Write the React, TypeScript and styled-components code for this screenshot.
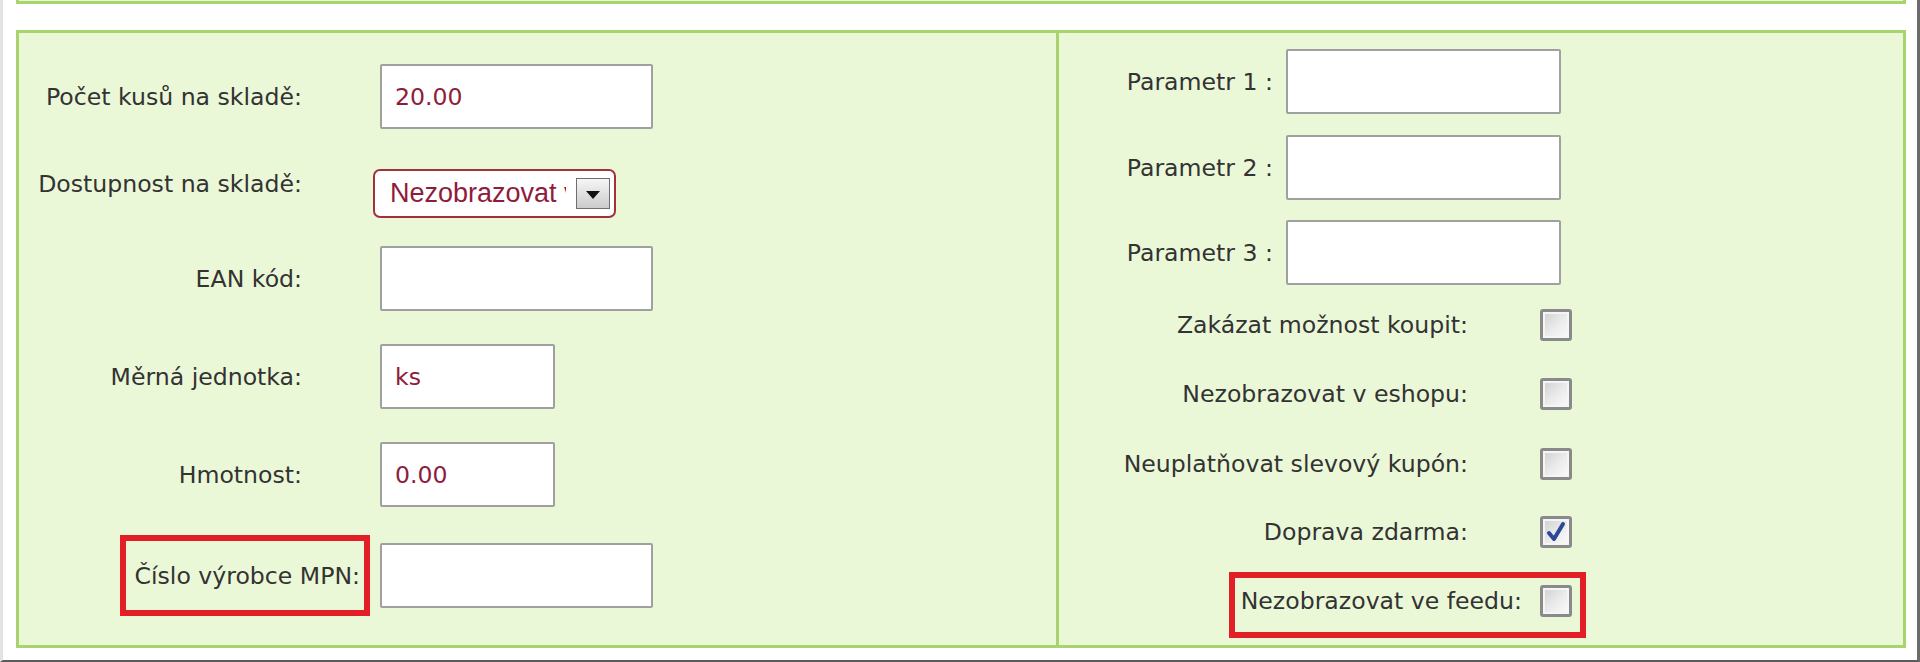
import React from 'react';
import styled, { createGlobalStyle } from 'styled-components';

const GlobalStyle = createGlobalStyle`
  html, body {
    margin: 0;
    padding: 0;
    background: #fff;
  }
  body {
    font-family: "DejaVu Sans", Verdana, sans-serif;
  }
`;

const GREEN = '#a7d46c';
const PALE = '#ebf8d8';
const TEXT = '#333333';
const VALUE = '#8e1c3b';

const Page = styled.div`
  box-sizing: border-box;
  width: 1920px;
  height: 662px;
  border-left: 3px solid #e3e3e3;
  border-right: 3px solid #6b6b6b;
  border-bottom: 2px solid #5b5b5b;
  padding: 0 11px 0 13px;
  background: #fff;
  overflow: hidden;
`;

const TopPanel = styled.div`
  height: 1px;
  background: ${PALE};
  border: 3px solid ${GREEN};
  border-top: none;
`;

const Panel = styled.div`
  box-sizing: border-box;
  margin-top: 26px;
  height: 618px;
  border: 3px solid ${GREEN};
  background: ${PALE};
  display: grid;
  grid-template-columns: 1040px 1fr;
`;

const LeftColumn = styled.div`
  border-right: 3px solid ${GREEN};
  display: flex;
  flex-direction: column;
`;

const RightColumn = styled.div`
  display: flex;
  flex-direction: column;
`;

const FieldRow = styled.div<{ $mt: number; $cols: number; $align?: string }>`
  display: grid;
  grid-template-columns: ${p => p.$cols}px auto;
  align-items: ${p => p.$align ?? 'center'};
  justify-items: start;
  margin-top: ${p => p.$mt}px;
`;

const Label = styled.label<{ $pr: number }>`
  justify-self: stretch;
  text-align: right;
  padding-right: ${p => p.$pr}px;
  font-size: 23.6px;
  line-height: 30px;
  color: ${TEXT};
  white-space: nowrap;
`;

const TextInput = styled.input<{ $w: number; $ml: number }>`
  box-sizing: border-box;
  width: ${p => p.$w}px;
  height: 65px;
  margin: 0 0 0 ${p => p.$ml}px;
  padding: 0 0 0 13px;
  border: 2px solid #a0a0a0;
  border-radius: 2px;
  background: #fff;
  font: 23.6px "DejaVu Sans", Verdana, sans-serif;
  color: ${VALUE};
  outline: none;
`;

const Select = styled.div`
  box-sizing: border-box;
  margin-left: 1px;
  width: 243px;
  height: 49px;
  border: 2px solid #a3313b;
  border-radius: 7px;
  background: #fff;
  display: flex;
  align-items: center;
  padding: 0 4px 0 15px;
`;

const SelectText = styled.span`
  width: 176px;
  overflow: hidden;
  white-space: nowrap;
  font: 27px "Liberation Sans", Arial, sans-serif;
  color: ${VALUE};
`;

const SelectButton = styled.span`
  box-sizing: border-box;
  margin-left: auto;
  width: 34px;
  height: 31px;
  border: 1px solid #6f6f6f;
  background: linear-gradient(#f6f6f6, #cbcbcb);
  display: flex;
  align-items: center;
  justify-content: center;
`;

const Arrow = styled.span`
  width: 0;
  height: 0;
  border-left: 7px solid transparent;
  border-right: 7px solid transparent;
  border-top: 8px solid #111;
  margin-top: 2px;
`;

const Highlight = styled.div<{ $pad: string; $mr: number; $h?: number }>`
  box-sizing: border-box;
  border: 6px solid #e21f26;
  display: flex;
  align-items: center;
  padding: ${p => p.$pad};
  margin-right: ${p => p.$mr}px;
  ${p => (p.$h ? `height: ${p.$h}px;` : '')}
`;

const HighlightText = styled.span<{ $mr?: number }>`
  font-size: 23.6px;
  line-height: 30px;
  color: ${TEXT};
  white-space: nowrap;
  margin-right: ${p => p.$mr ?? 0}px;
`;

const CheckRow = styled.div<{ $mt: number }>`
  display: flex;
  justify-content: flex-end;
  align-items: center;
  margin-top: ${p => p.$mt}px;
  padding-right: 331px;
`;

const CheckLabel = styled.span<{ $mr: number }>`
  font-size: 23.6px;
  line-height: 30px;
  color: ${TEXT};
  white-space: nowrap;
  margin-right: ${p => p.$mr}px;
`;

const CheckBox = styled.span`
  box-sizing: border-box;
  flex: none;
  width: 32px;
  height: 32px;
  border: 3px solid #8a8a8a;
  border-radius: 3px;
  background: linear-gradient(135deg, #cfcfcf 0%, #ececec 55%, #fbfbfb 100%);
  box-shadow: inset 0 0 0 2px #f5f5f5;
  display: flex;
  align-items: center;
  justify-content: center;
`;

const Check = ({ checked }: { checked?: boolean }) => (
  <CheckBox>
    {checked && (
      <svg width="22" height="22" viewBox="0 0 22 22">
        <path d="M4 12 L9 18 L18 3" fill="none" stroke="#2b4896" strokeWidth="4" strokeLinecap="round" strokeLinejoin="round" />
      </svg>
    )}
  </CheckBox>
);

const App = () => {
  return (
    <>
      <GlobalStyle />
      <Page>
        <TopPanel />
        <Panel>
          <LeftColumn>
            <FieldRow $mt={31} $cols={353}>
              <Label $pr={70}>Počet kusů na skladě:</Label>
              <TextInput $w={273} $ml={8} defaultValue="20.00" />
            </FieldRow>
            <FieldRow $mt={40} $cols={353} $align="start">
              <Label $pr={70}>Dostupnost na skladě:</Label>
              <Select>
                <SelectText>Nezobrazovat v eshopu</SelectText>
                <SelectButton>
                  <Arrow />
                </SelectButton>
              </Select>
            </FieldRow>
            <FieldRow $mt={28} $cols={353}>
              <Label $pr={70}>EAN kód:</Label>
              <TextInput $w={273} $ml={8} defaultValue="" />
            </FieldRow>
            <FieldRow $mt={33} $cols={353}>
              <Label $pr={70}>Měrná jednotka:</Label>
              <TextInput $w={175} $ml={8} defaultValue="ks" />
            </FieldRow>
            <FieldRow $mt={33} $cols={353}>
              <Label $pr={70}>Hmotnost:</Label>
              <TextInput $w={175} $ml={8} defaultValue="0.00" />
            </FieldRow>
            <FieldRow $mt={28} $cols={353}>
              <Highlight $pad="0 4px 0 9px" $mr={2} $h={81} style={{ justifySelf: 'end' }}>
                <HighlightText>Číslo výrobce MPN:</HighlightText>
              </Highlight>
              <TextInput $w={273} $ml={8} defaultValue="" />
            </FieldRow>
          </LeftColumn>
          <RightColumn>
            <FieldRow $mt={16} $cols={227}>
              <Label $pr={13}>Parametr 1 :</Label>
              <TextInput $w={275} $ml={0} defaultValue="" />
            </FieldRow>
            <FieldRow $mt={21} $cols={227}>
              <Label $pr={13}>Parametr 2 :</Label>
              <TextInput $w={275} $ml={0} defaultValue="" />
            </FieldRow>
            <FieldRow $mt={20} $cols={227}>
              <Label $pr={13}>Parametr 3 :</Label>
              <TextInput $w={275} $ml={0} defaultValue="" />
            </FieldRow>
            <CheckRow $mt={24}>
              <CheckLabel $mr={72}>Zakázat možnost koupit:</CheckLabel>
              <Check />
            </CheckRow>
            <CheckRow $mt={37}>
              <CheckLabel $mr={72}>Nezobrazovat v eshopu:</CheckLabel>
              <Check />
            </CheckRow>
            <CheckRow $mt={38}>
              <CheckLabel $mr={72}>Neuplatňovat slevový kupón:</CheckLabel>
              <Check />
            </CheckRow>
            <CheckRow $mt={36}>
              <CheckLabel $mr={72}>Doprava zdarma:</CheckLabel>
              <Check checked />
            </CheckRow>
            <CheckRow $mt={24}>
              <Highlight $pad="7px 8px 15px 6px" $mr={-14}>
                <HighlightText $mr={18}>Nezobrazovat ve feedu:</HighlightText>
                <Check />
              </Highlight>
            </CheckRow>
          </RightColumn>
        </Panel>
      </Page>
    </>
  );
};

export default App;
